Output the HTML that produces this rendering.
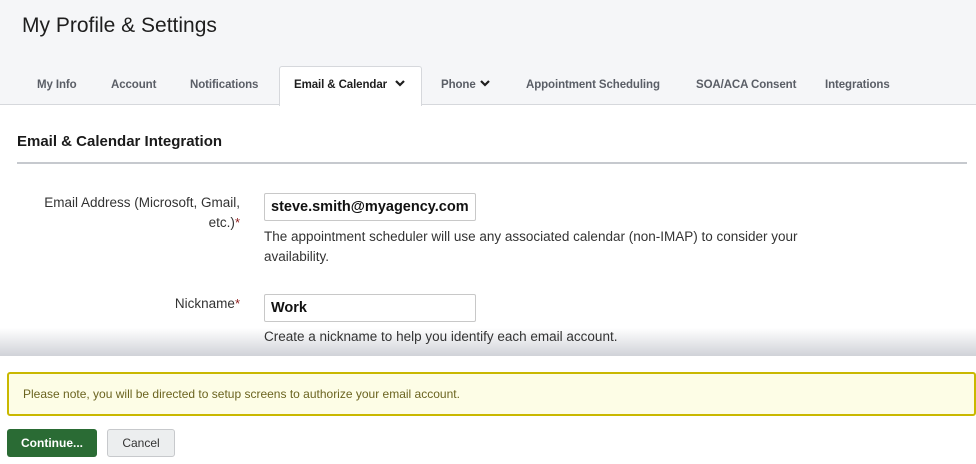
<!DOCTYPE html>
<html><head><style>
body{margin:0;width:976px;height:464px;overflow:hidden;background:#fff;font-family:"Liberation Sans",sans-serif;position:relative}
.hdr{position:absolute;left:0;top:0;width:976px;height:104px;background:#f5f6f8;border-bottom:1px solid #d6d8dc}
.title{position:absolute;left:22px;top:14px;font-size:21px;color:#1e1e1e}
.tab{position:absolute;top:79px;font-size:11.5px;font-weight:bold;color:#5a5e66;letter-spacing:-0.1px}
.act{position:absolute;left:279px;top:66px;width:141px;height:39px;background:#fff;border:1px solid #d6d8dc;border-bottom:none;border-radius:3px 3px 0 0}
.h2{position:absolute;left:17px;top:133px;font-size:15px;font-weight:bold;color:#1a1a1a}
.rule{position:absolute;left:17px;top:162px;width:950px;height:2px;background:#c6c9ce}
.lbl{position:absolute;right:736px;text-align:right;font-size:13.5px;color:#333;line-height:20px}
.star{color:#8b1a1a;font-size:13px;vertical-align:top}
.inp{position:absolute;left:264px;width:212px;height:28px;box-sizing:border-box;border:1px solid #c8c8c8;border-radius:2px;font-size:14.5px;font-weight:bold;padding-left:6px;line-height:26px;color:#111;overflow:hidden;white-space:nowrap}
.help{position:absolute;left:264px;font-size:13.5px;color:#333;line-height:20px;width:580px}
.fade{position:absolute;left:0;top:328px;width:976px;height:28px;background:linear-gradient(#fff0,#d0d2d8)}
.note{position:absolute;left:7px;top:372px;border:2px solid #c9b800;border-radius:3px;background:#fdfde6;font-size:12px;color:#6b6420;line-height:40px;padding-left:14px;box-sizing:border-box;width:969px;height:44px}
.btn1{position:absolute;left:7px;top:429px;width:90px;height:28px;background:#2a6b34;border-radius:3px;color:#fff;font-size:12px;font-weight:bold;text-align:center;line-height:28px}
.btn2{position:absolute;left:107px;top:429px;width:66px;height:26px;background:#eceeef;border:1px solid #c7c9cc;border-radius:3px;color:#333;font-size:12px;text-align:center;line-height:26px}
</style></head><body>
<div class="hdr">
<div class="title">My Profile &amp; Settings</div>
<div class="act"></div>
<div class="tab" style="left:37px">My Info</div>
<div class="tab" style="left:111px">Account</div>
<div class="tab" style="left:190px">Notifications</div>
<div class="tab" style="left:294px;color:#1e1e1e">Email &amp; Calendar <svg width="12" height="9" viewBox="0 0 12 9" style="margin-left:4px"><path d="M2 2l4 4 4-4" stroke="#1e1e1e" stroke-width="2.2" fill="none"/></svg></div>
<div class="tab" style="left:441px">Phone <svg width="12" height="9" viewBox="0 0 12 9"><path d="M2 2l4 4 4-4" stroke="#1e1e1e" stroke-width="2.2" fill="none"/></svg></div>
<div class="tab" style="left:526px">Appointment Scheduling</div>
<div class="tab" style="left:696px">SOA/ACA Consent</div>
<div class="tab" style="left:825px">Integrations</div>
</div>
<div class="h2">Email &amp; Calendar Integration</div>
<div class="rule"></div>
<div class="fade"></div>
<div class="lbl" style="top:193px">Email Address (Microsoft, Gmail,<br>etc.)<span class="star">*</span></div>
<div class="inp" style="top:193px">steve.smith@myagency.com</div>
<div class="help" style="top:227px">The appointment scheduler will use any associated calendar (non-IMAP) to consider your<br>availability.</div>
<div class="lbl" style="top:294px">Nickname<span class="star">*</span></div>
<div class="inp" style="top:294px">Work</div>
<div class="help" style="top:327px">Create a nickname to help you identify each email account.</div>
<div class="note">Please note, you will be directed to setup screens to authorize your email account.</div>
<div class="btn1">Continue...</div>
<div class="btn2">Cancel</div>
</body></html>
